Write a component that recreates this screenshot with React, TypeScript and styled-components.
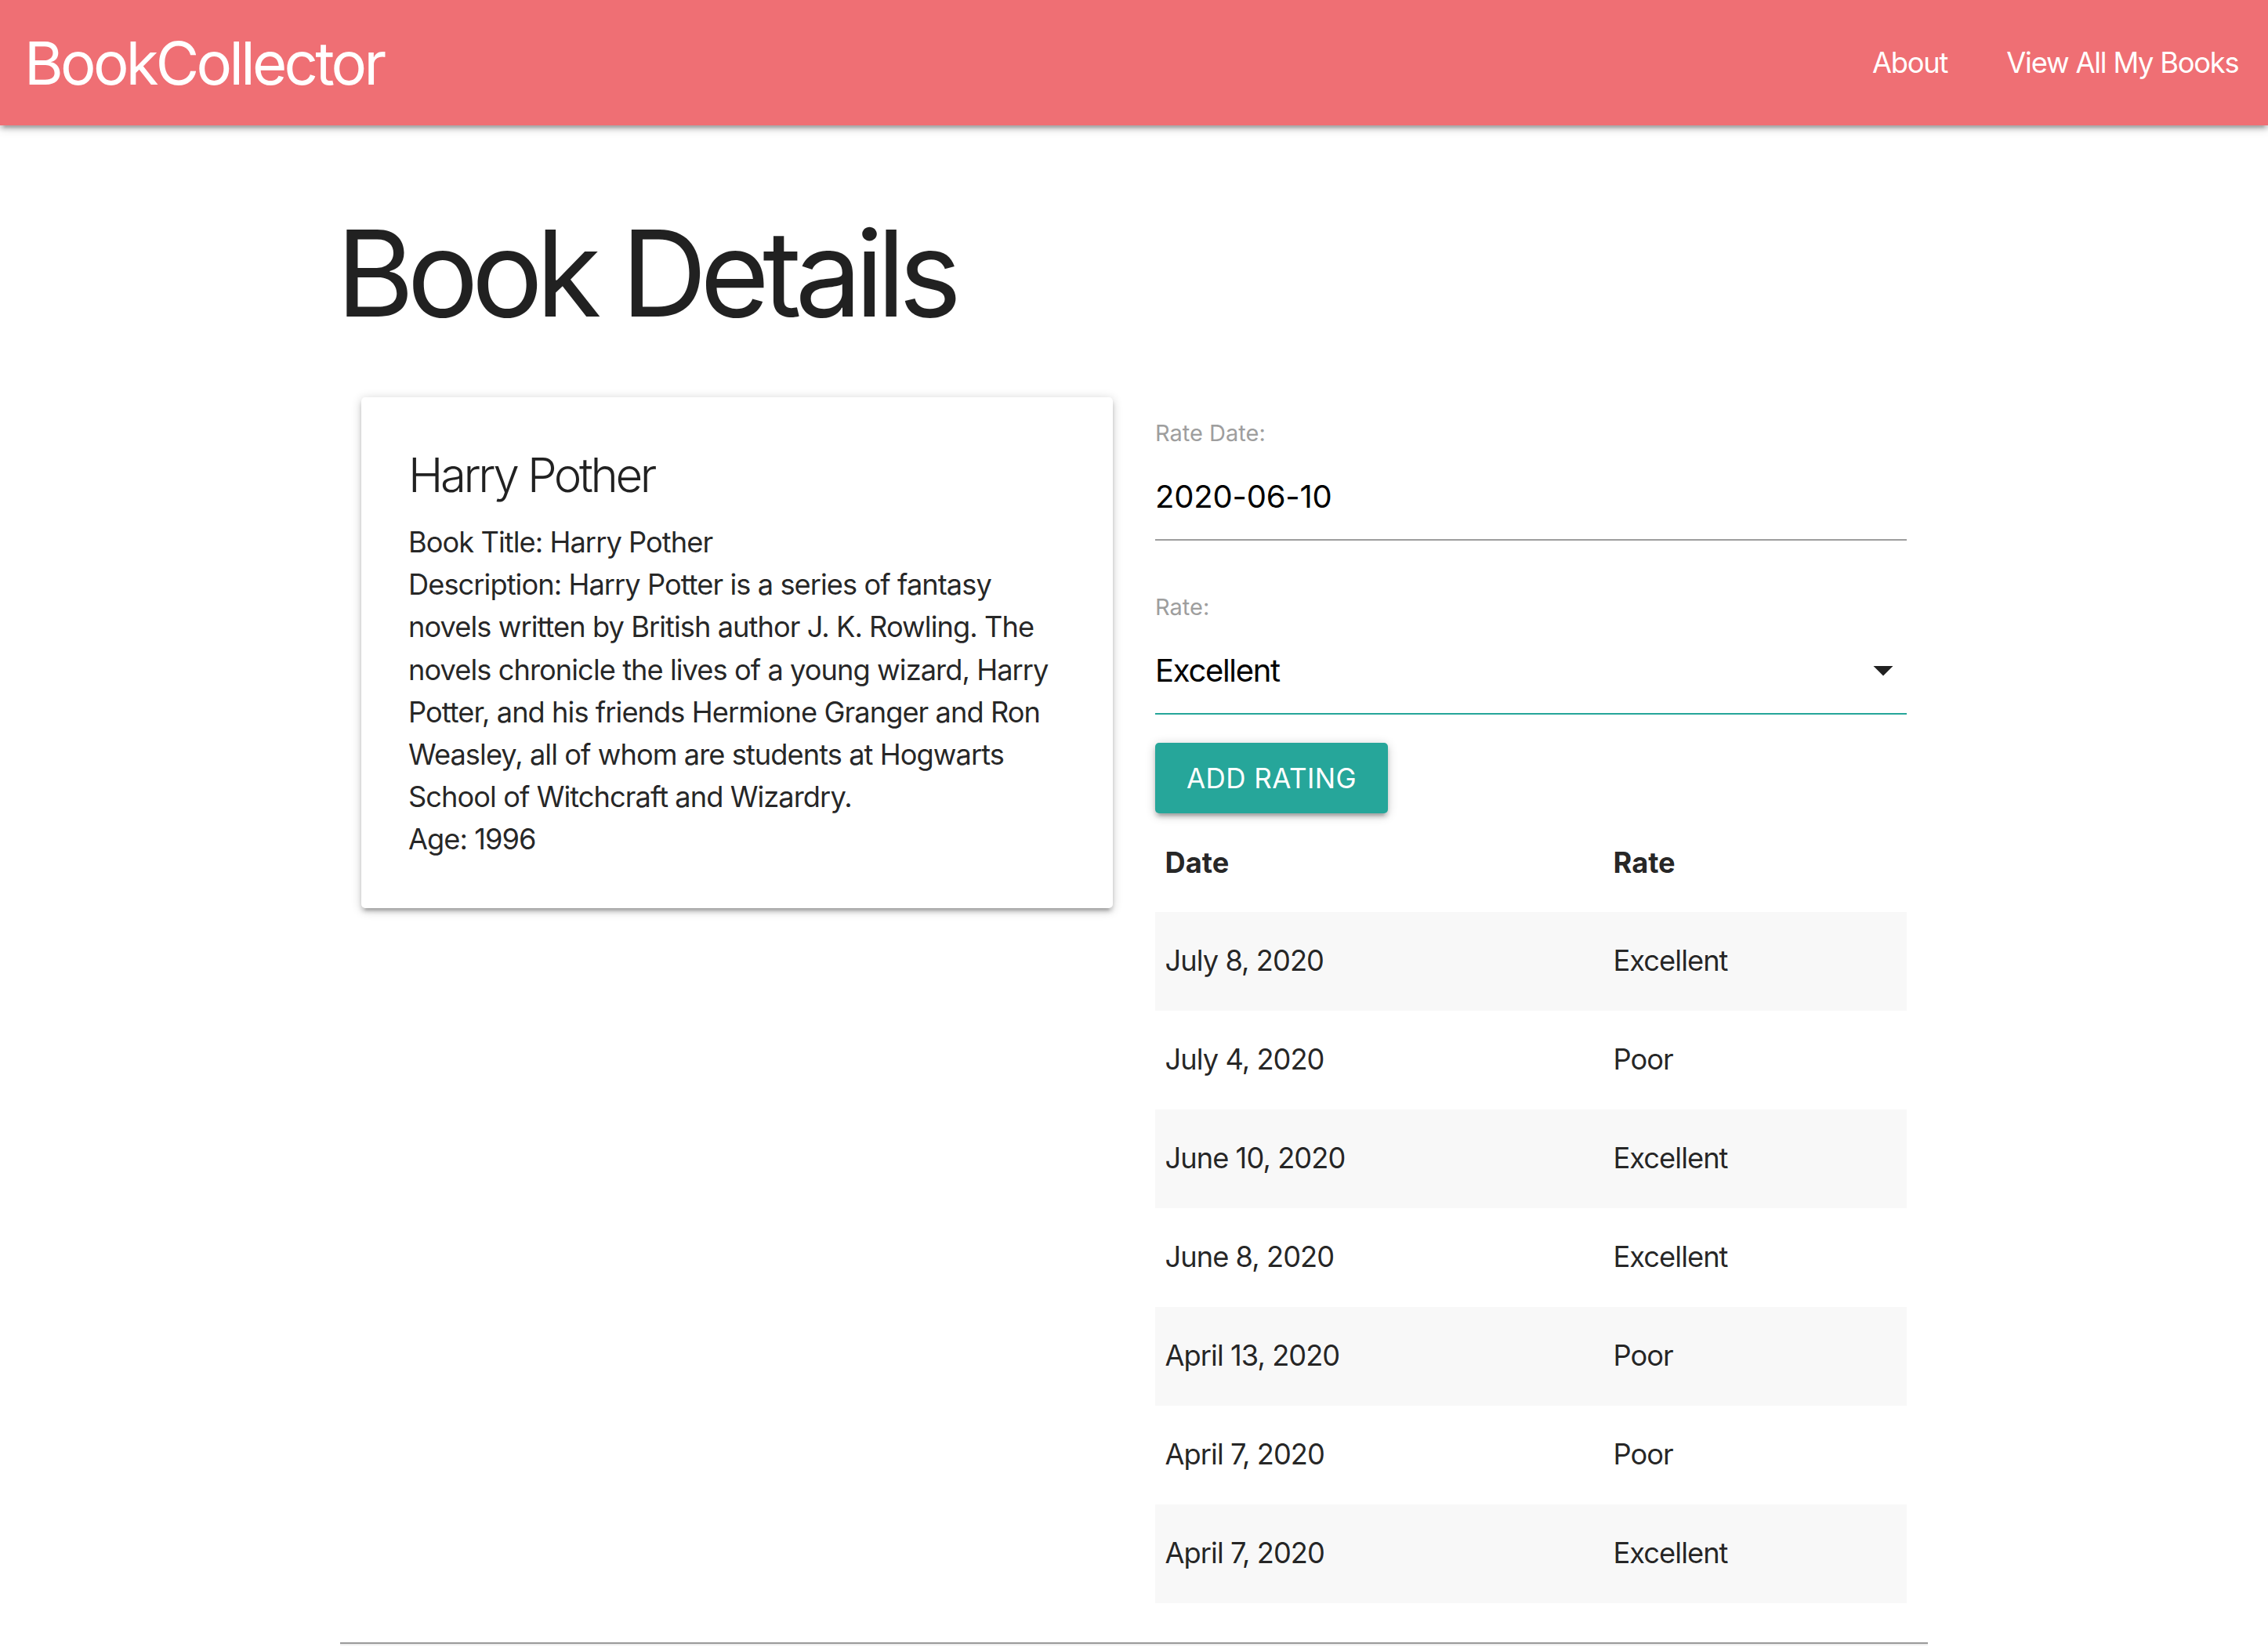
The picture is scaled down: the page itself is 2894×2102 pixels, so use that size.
import React from "react";
import styled, { createGlobalStyle } from "styled-components";

const Global = createGlobalStyle`
  html, body { margin: 0; padding: 0; background: #ffffff; }
  body {
    font-family: Inter, "Noto Sans", sans-serif;
    color: rgba(0, 0, 0, 0.87);
    font-size: 36.25px;
    line-height: 1.5;
    letter-spacing: -0.95px;
  }
  * { box-sizing: border-box; }
`;

const shadow =
  "0 5px 5px 0 rgba(0,0,0,0.14), 0 7.5px 2.5px -5px rgba(0,0,0,0.12), 0 2.5px 12.5px 0 rgba(0,0,0,0.2)";

const Nav = styled.nav`
  position: relative;
  z-index: 2;
  height: 160px;
  background: #ef6f74;
  color: #ffffff;
  display: flex;
  align-items: center;
  justify-content: space-between;
  box-shadow: ${shadow};
`;

const Brand = styled.a`
  font-size: 76px;
  line-height: 160px;
  padding-left: 31px;
  letter-spacing: -3.7px;
  color: #ffffff;
  text-decoration: none;
`;

const NavLinks = styled.ul`
  display: flex;
  list-style: none;
  margin: 0;
  padding: 0;
`;

const NavLink = styled.a`
  display: block;
  padding: 0 37.5px;
  line-height: 160px;
  font-size: 36.25px;
  letter-spacing: -1.2px;
  color: #ffffff;
  text-decoration: none;
`;

const Container = styled.main`
  width: 2026px;
  margin: 0 auto;
`;

const Title = styled.h1`
  font-size: 152px;
  font-weight: 400;
  line-height: 167px;
  letter-spacing: -8.9px;
  margin: 106px 0 56px -5px;
  color: rgba(0, 0, 0, 0.87);
`;

const Row = styled.div`
  display: grid;
  grid-template-columns: 1fr 1fr;
  margin-bottom: 50px;
`;

const Col = styled.div`
  padding: 0 27px;
`;

const Card = styled.div`
  margin-top: 18px;
  background: #ffffff;
  border-radius: 5px;
  box-shadow: ${shadow};
  padding: 59px 60px 60px;
`;

const CardTitle = styled.span`
  display: block;
  font-size: 60px;
  font-weight: 300;
  line-height: 80px;
  letter-spacing: -3.4px;
  margin-bottom: 19px;
`;

const CardText = styled.p`
  margin: 0;
  line-height: 54.2px;
`;

const Form = styled.form`
  padding-top: 46px;
`;

const Field = styled.div<{ $gap?: number }>`
  margin-bottom: ${(p) => p.$gap ?? 0}px;
`;

const FieldLabel = styled.label`
  display: block;
  font-size: 29px;
  line-height: 36px;
  letter-spacing: 0;
  color: #9e9e9e;
`;

const TextInput = styled.input`
  display: block;
  width: 100%;
  height: 111.5px;
  margin: 7.5px 0 0;
  padding: 0;
  border: none;
  border-bottom: 2.5px solid #9e9e9e;
  background: transparent;
  font-family: inherit;
  font-size: 40px;
  letter-spacing: -0.2px;
  color: #000000;
  outline: none;
`;

const SelectBox = styled.div`
  position: relative;
  height: 111.5px;
  margin-top: 7.5px;
  border-bottom: 2.5px solid #26a69a;
  font-size: 40px;
  line-height: 109px;
  letter-spacing: -1.3px;
  color: #000000;
`;

const Caret = styled.svg`
  position: absolute;
  right: 0;
  top: 50%;
  transform: translateY(-50%);
  width: 60px;
  height: 60px;
  fill: rgba(0, 0, 0, 0.87);
`;

const Button = styled.button`
  display: inline-block;
  margin-top: 35.5px;
  height: 90px;
  padding: 0 40px;
  border: none;
  border-radius: 5px;
  background: #26a69a;
  color: #ffffff;
  font-family: inherit;
  font-size: 35px;
  letter-spacing: 0.45px;
  line-height: 90px;
  text-transform: uppercase;
  box-shadow: ${shadow};
  cursor: pointer;
`;

const Table = styled.table`
  width: 100%;
  border-collapse: collapse;
  margin-top: 0;
`;

const HeadCell = styled.th<{ $w?: number }>`
  text-align: left;
  font-weight: 700;
  letter-spacing: 0;
  height: 126px;
  padding: 2px 12.5px 0;
  vertical-align: middle;
  width: ${(p) => (p.$w ? `${p.$w}px` : "auto")};
`;

const BodyRow = styled.tr`
  &:nth-child(odd) {
    background: #f8f8f8;
  }
`;

const Cell = styled.td`
  height: 126px;
  padding: 0 12.5px;
  vertical-align: middle;
`;

const Rule = styled.hr`
  margin: 0 auto;
  width: 2026px;
  height: 0;
  border: none;
  border-top: 2.5px solid #9a9a9a;
  border-bottom: 2.5px solid #eeeeee;
`;

const ratings = [
  ["July 8, 2020", "Excellent"],
  ["July 4, 2020", "Poor"],
  ["June 10, 2020", "Excellent"],
  ["June 8, 2020", "Excellent"],
  ["April 13, 2020", "Poor"],
  ["April 7, 2020", "Poor"],
  ["April 7, 2020", "Excellent"],
];

export default function App() {
  return (
    <>
      <Global />
      <Nav>
        <Brand href="#">BookCollector</Brand>
        <NavLinks>
          <li>
            <NavLink href="#">About</NavLink>
          </li>
          <li>
            <NavLink href="#">View All My Books</NavLink>
          </li>
        </NavLinks>
      </Nav>
      <Container>
        <Title>Book Details</Title>
        <Row>
          <Col>
            <Card>
              <CardTitle>Harry Pother</CardTitle>
              <CardText>Book Title: Harry Pother</CardText>
              <CardText>
                Description: Harry Potter is a series of fantasy
                <br />
                novels written by British author J. K. Rowling. The
                <br />
                novels chronicle the lives of a young wizard, Harry
                <br />
                Potter, and his friends Hermione Granger and Ron
                <br />
                Weasley, all of whom are students at Hogwarts
                <br />
                School of Witchcraft and Wizardry.
              </CardText>
              <CardText>Age: 1996</CardText>
            </Card>
          </Col>
          <Col>
            <Form onSubmit={(e) => e.preventDefault()}>
              <Field $gap={67}>
                <FieldLabel htmlFor="rate-date">Rate Date:</FieldLabel>
                <TextInput id="rate-date" type="text" defaultValue="2020-06-10" />
              </Field>
              <Field>
                <FieldLabel>Rate:</FieldLabel>
                <SelectBox>
                  Excellent
                  <Caret viewBox="0 0 24 24">
                    <path d="M7 10l5 5 5-5z" />
                  </Caret>
                </SelectBox>
              </Field>
              <Button type="submit">Add Rating</Button>
            </Form>
            <Table>
              <thead>
                <tr>
                  <HeadCell $w={572}>Date</HeadCell>
                  <HeadCell>Rate</HeadCell>
                </tr>
              </thead>
              <tbody>
                {ratings.map(([d, r], i) => (
                  <BodyRow key={i}>
                    <Cell>{d}</Cell>
                    <Cell>{r}</Cell>
                  </BodyRow>
                ))}
              </tbody>
            </Table>
          </Col>
        </Row>
        <Rule />
      </Container>
    </>
  );
}
